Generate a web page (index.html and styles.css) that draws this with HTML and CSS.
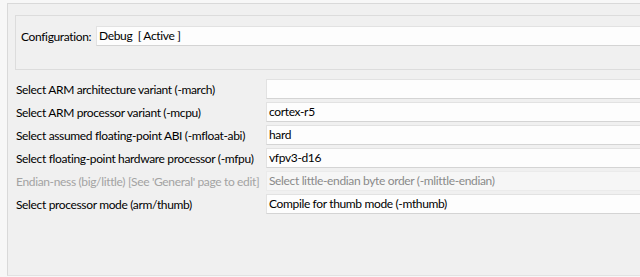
FILE: index.html
```html
<!DOCTYPE html>
<html lang="en">

<head>
    <meta charset="UTF-8" />
    <meta name="viewport" content="width=device-width, initial-scale=1.0" />
    <title>Tool Settings - Target Processor</title>
    <link rel="stylesheet" href="styles.css">
</head>

<body>
    <div class="panel">
        <div class="config-group">
            <label class="config-label">Configuration:</label>
            <div class="field">Debug&nbsp; [ Active ]</div>
        </div>

        <div class="options">
            <div class="row">
                <span class="label">Select ARM architecture variant (-march)</span>
                <div class="field"></div>
            </div>
            <div class="row">
                <span class="label">Select ARM processor variant (-mcpu)</span>
                <div class="field">cortex-r5</div>
            </div>
            <div class="row">
                <span class="label">Select assumed floating-point ABI (-mfloat-abi)</span>
                <div class="field">hard</div>
            </div>
            <div class="row">
                <span class="label">Select floating-point hardware processor (-mfpu)</span>
                <div class="field">vfpv3-d16</div>
            </div>
            <div class="row disabled">
                <span class="label">Endian-ness (big/little) [See 'General' page to edit]</span>
                <div class="field">Select little-endian byte order (-mlittle-endian)</div>
            </div>
            <div class="row">
                <span class="label">Select processor mode (arm/thumb)</span>
                <div class="field">Compile for thumb mode (-mthumb)</div>
            </div>
        </div>
    </div>
</body>

</html>
```

FILE: styles.css
```css
body {
    margin: 0;
    background-color: #f7f7f7;
    font-family: 'Segoe UI', Lato, sans-serif;
    font-size: 12px;
    letter-spacing: -0.35px;
    color: #000;
    overflow: hidden;
    height: 277px;
}

.panel {
    margin: 3px 0 0 7px;
    width: 632px;
    height: 271px;
    background-color: #f0f0f0;
    border-top: 1px solid #d9d9d9;
    border-left: 1px solid #d9d9d9;
    border-bottom: 1px solid #e2e2e2;
}

.config-group {
    margin: 11px 0 0 7px;
    border: 1px solid #dcdcdc;
    border-right: none;
    padding: 10px 0 23px 5px;
    display: flex;
    align-items: center;
}

.config-label {
    width: 75px;
    white-space: nowrap;
}

.field {
    flex: 1;
    min-width: 0;
    height: 18px;
    line-height: 18px;
    padding-left: 2px;
    background-color: #fdfdfd;
    border: 1px solid #e2e2e2;
    border-bottom-color: #d4d4d4;
    border-right: none;
    white-space: nowrap;
    overflow: hidden;
}

.options {
    margin-top: 9px;
    padding-left: 8px;
    display: flex;
    flex-direction: column;
    gap: 3px;
}

.row {
    display: flex;
    align-items: center;
}

.row .label {
    width: 250px;
    flex-shrink: 0;
    white-space: nowrap;
}

.disabled .label {
    color: #a3a3a3;
}

.disabled .field {
    color: #8a8a8a;
    background-color: #f6f6f6;
    border-color: #ebebeb;
}
```
